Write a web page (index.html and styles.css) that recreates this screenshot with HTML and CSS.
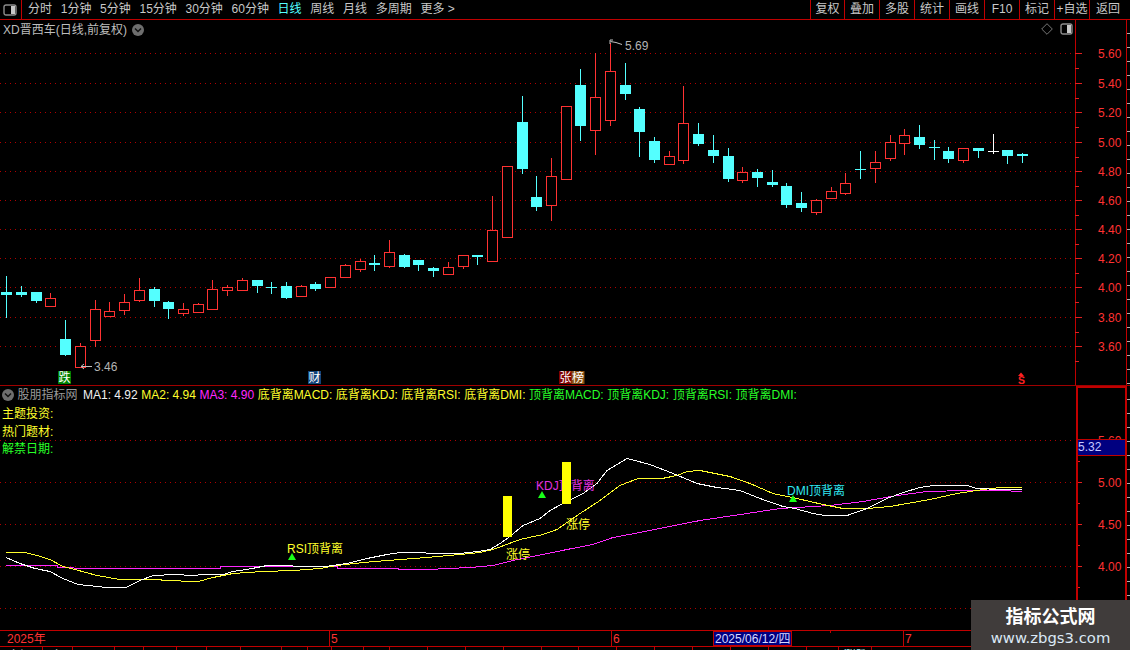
FILE: index.html
```html
<!DOCTYPE html>
<html lang="zh-CN">
<head>
<meta charset="utf-8">
<title>XD晋西车</title>
<link rel="stylesheet" href="styles.css">
</head>
<body>
<div class="app">
  <header class="toolbar">
    <div class="toggle-cell">
      <svg class="win-icon" width="14" height="12" viewBox="0 0 14 12"><rect x="1" y="1" width="12" height="10" rx="2" fill="none" stroke="#8c8c8c" stroke-width="1.4"/><rect x="8" y="2" width="4" height="8" fill="#c8c8c8"/></svg>
    </div>
    <nav class="periods">
      <span>分时</span><span>1分钟</span><span>5分钟</span><span>15分钟</span><span>30分钟</span><span>60分钟</span><span class="active">日线</span><span>周线</span><span>月线</span><span>多周期</span><span>更多 &gt;</span>
    </nav>
    <div class="tools">
      <span>复权</span><span>叠加</span><span>多股</span><span>统计</span><span>画线</span><span>F10</span><span>标记</span><span>+自选</span><span class="back">返回</span>
    </div>
  </header>

  <section class="row price-row">
    <div class="plot">
      <svg id="price" class="canvas" width="1075" height="365" viewBox="0 20 1075 365"></svg>
      <div class="pane-title">
        <span>XD晋西车(日线,前复权)</span>
        <svg width="12" height="12" viewBox="0 0 12 12"><circle cx="6" cy="6" r="6" fill="#6e6e6e"/><path d="M3 4.5 6 7.5 9 4.5" fill="none" stroke="#111" stroke-width="1.5"/></svg>
      </div>
      <div class="pane-icons">
        <svg width="12" height="12" viewBox="0 0 12 12"><path d="M6 .7 11.3 6 6 11.3 .7 6Z" fill="none" stroke="#777"/></svg>
        <svg width="13" height="12" viewBox="0 0 13 12"><rect x="1" y="1" width="11" height="10" rx="2" fill="none" stroke="#8c8c8c" stroke-width="1.4"/><rect x="7" y="2" width="4" height="8" fill="#c8c8c8"/></svg>
      </div>
    </div>
    <svg id="priceAxis" class="axis" width="51" height="365" viewBox="1075 20 51 365"></svg>
    <div class="rail"></div>
  </section>

  <section class="row ind-row">
    <div class="plot">
      <svg id="ind" class="canvas" width="1075" height="244" viewBox="0 386 1075 244"></svg>
      <div class="ind-head">
        <div class="legend">
          <svg class="legend-icon" width="12" height="12" viewBox="0 0 12 12"><circle cx="6" cy="6" r="6" fill="#6e6e6e"/><path d="M3 4.5 6 7.5 9 4.5" fill="none" stroke="#111" stroke-width="1.5"/></svg>
          <span class="gray name">股朋指标网</span>
          <span class="white">MA1: 4.92</span>
          <span class="yellow">MA2: 4.94</span>
          <span class="magenta">MA3: 4.90</span>
          <span class="yellow">底背离MACD:</span>
          <span class="yellow">底背离KDJ:</span>
          <span class="yellow">底背离RSI:</span>
          <span class="yellow">底背离DMI:</span>
          <span class="green">顶背离MACD:</span>
          <span class="green">顶背离KDJ:</span>
          <span class="green">顶背离RSI:</span>
          <span class="green">顶背离DMI:</span>
        </div>
        <div class="facts">
          <div class="yellow">主题投资:</div>
          <div class="yellow">热门题材:</div>
          <div class="green">解禁日期:</div>
        </div>
      </div>
    </div>
    <div class="ind-axis">
      <svg id="indAxis" width="48" height="242" viewBox="1078 388 48 242"></svg>
      <div class="cur-value">5.32</div>
    </div>
    <div class="rail"></div>
  </section>

  <svg id="dates" class="dates" width="1130" height="16" viewBox="0 630 1130 16"></svg>
  <div class="status">
    <span>上证</span><span>上</span><span></span><span></span><span></span><span></span><span></span><span></span><span></span><span></span><span></span><span></span><span></span><span></span><span></span><span></span><span></span><span></span><span></span><span></span><span></span><span></span><span></span><span></span><span class="st-cyan">涨跌</span><span></span>
  </div>

  <aside class="watermark">
    <div class="wm-title">指标公式网</div>
    <div class="wm-url">www.zbgs3.com</div>
  </aside>
</div>
<script src="chart.js"></script>
</body>
</html>
```
FILE: styles.css
```css
* { box-sizing: border-box; }
html, body { margin: 0; padding: 0; background: #000; }
body { font-family: "Liberation Sans", "Noto Sans CJK SC", sans-serif; font-size: 12px; color: #c8c8c8; }
.app { position: relative; width: 1130px; height: 650px; overflow: hidden; display: flex; flex-direction: column; background: #000; }

.toolbar { display: flex; height: 20px; flex: none; border-bottom: 1px solid #c00000; line-height: 18px; }
.toggle-cell { width: 22px; border-right: 1px solid #c00000; display: flex; align-items: center; justify-content: center; padding-right: 1px; }
.periods { display: flex; gap: 8.7px; padding-left: 6px; }
.periods .active { color: #54ffff; }
.tools { margin-left: auto; display: grid; grid-template-columns: 34px repeat(7, 35px) 41px; }
.tools span { border-left: 1px solid #c00000; text-align: center; }
.tools .back { padding-right: 4px; }

.row { display: flex; flex: none; }
.price-row { height: 366px; border-bottom: 1px solid #a00000; }
.ind-row { height: 244px; }
.plot { position: relative; width: 1075px; flex: none; }
.canvas { display: block; }
.axis { display: block; flex: none; }
.rail { width: 4px; flex: none; border-left: 1px solid #c00000; background: repeating-linear-gradient(180deg, #000 0 13px, #b0b0b0 13px 14px); }

.pane-title { position: absolute; left: 3px; top: 2px; display: flex; align-items: center; gap: 5px; line-height: 16px; color: #bdbdbd; }
.pane-icons { position: absolute; left: 1041px; top: 3px; display: flex; gap: 7px; }

.ind-head { position: absolute; left: 0; top: 0; }
.legend { display: flex; align-items: center; gap: 3.5px; padding: 1px 0 0 2px; line-height: 16px; white-space: nowrap; }
.legend .name { margin-right: 2px; }
.facts { padding: 3px 0 0 2px; line-height: 17.5px; }

.gray { color: #9a9a9a; }
.white { color: #f0f0f0; }
.yellow { color: #ffff2c; }
.magenta { color: #ff28ff; }
.green { color: #28ff28; }

.ind-axis { position: relative; width: 51px; flex: none; border: solid #c00000; border-width: 2px 2px 0 2px; margin-left: 1px; margin-right: -1px; }
.ind-axis svg { display: block; }
.cur-value { position: absolute; left: 0; right: 0; top: 51px; height: 17px; background: #000080; border-top: 1px solid #c00000; border-bottom: 1px solid #c00000; color: #c8c8ff; line-height: 15px; }

.dates { display: block; flex: none; }
.status { flex: 1; border-top: 1px solid #c00000; color: #f0f0f0; display: grid; grid-template-columns: 43px 30px 42px 29px 33px 30px 34px 41px 26px 24px 32px 26px repeat(11, 37.9px) 32px 33px 1fr; line-height: 16px; }
.status span { padding: 1px 0 0 8px; border-right: 1px solid #c00000; height: 4px; overflow: hidden; }
.status .st-cyan { padding-left: 5px; color: #b8f8ff; }

.watermark { position: absolute; left: 971px; top: 600px; width: 159px; height: 50px; background: #403c3b; text-align: center; color: #fff; }
.wm-title { font-family: "Noto Sans CJK SC", sans-serif; font-weight: 700; font-size: 18px; line-height: 26px; padding-top: 2px; }
.wm-url { font-family: "DejaVu Sans", sans-serif; font-size: 14.8px; line-height: 19px; color: #dbe8f5; }

svg text { font-family: "Liberation Sans", "Noto Sans CJK SC", sans-serif; font-size: 12px; }
svg text.sell-mark { font-size: 10.5px; font-weight: 700; }
.c-line { fill: none; stroke-width: 1; shape-rendering: crispEdges; }
.grid { stroke: #b00000; stroke-dasharray: 1 4; shape-rendering: crispEdges; }
.tick { stroke: #e02020; shape-rendering: crispEdges; }
.rline { stroke: #c00000; shape-rendering: crispEdges; }
.axis-text { fill: #ff3232; }
```
FILE: chart.js
```js
var NS = 'http://www.w3.org/2000/svg';
function el(parent, tag, attrs, text) {
  var n = document.createElementNS(NS, tag);
  for (var k in attrs) n.setAttribute(k, attrs[k]);
  if (text) n.textContent = text;
  parent.appendChild(n);
  return n;
}
function $(id) { return document.getElementById(id); }

var RED = '#ff3232', CYAN = '#54ffff';
// colour, high, body top, body bottom, low
var candles = [
 ['c',276,292,295,317],['c',286,292,295,296],['c',292,292,301,302],['r',293,298,306,306],
 ['c',320,339,355,355],['r',343,346,367,367],['r',300,309,340,346],['r',302,311,316,316],
 ['r',294,302,310,314],['r',278,290,300,301],['c',287,289,301,306],['c',301,302,309,318],
 ['r',303,309,313,315],['r',303,304,312,312],['r',280,289,309,309],['r',285,287,290,295],
 ['r',278,280,290,290],['c',280,280,286,292],['c',282,287,288,293],['c',282,286,298,298],
 ['r',285,286,296,296],['c',282,284,289,290],['r',277,277,287,287],['r',264,265,277,277],
 ['r',259,261,269,271],['c',255,263,265,270],['r',240,252,266,267],['c',254,255,267,267],
 ['c',260,260,265,270],['c',267,268,271,276],['r',262,267,274,274],['r',255,255,266,268],
 ['c',255,255,257,264],['r',196,230,261,261],['r',166,166,237,237],['c',96,122,169,173],
 ['c',176,197,207,210],['r',158,176,205,220],['r',106,106,179,179],['c',69,85,126,140],
 ['r',53,97,130,154],['r',43,71,120,125],['c',63,85,94,99],['c',107,109,132,156],
 ['c',137,141,160,162],['r',151,156,164,164],['r',86,123,160,163],['c',123,134,144,145],
 ['c',135,150,156,162],['c',148,156,179,181],['r',167,172,180,182],['c',169,172,178,186],
 ['c',170,182,185,186],['c',183,186,205,207],['c',192,203,208,211],['r',199,200,212,214],
 ['r',187,191,198,198],['r',173,183,193,194],['c',151,169,170,178],['r',151,162,168,182],
 ['r',135,142,158,160],['r',129,135,143,154],['c',125,137,145,148],['c',140,147,148,159],
 ['c',147,151,159,162],['r',148,148,160,162],['c',148,148,151,157],['w',134,151,152,153],
 ['c',150,150,156,163],['c',153,154,156,162]
];

var price = $('price');
[53,83,112,142,171,200,229,258,287,317,346].forEach(function (y) {
  el(price, 'line', {x1:0, x2:1075, y1:y+.5, y2:y+.5, 'class':'grid'});
});
candles.forEach(function (d, i) {
  var x = Math.round(6.3 + 14.72 * i);
  var col = d[0] === 'r' ? RED : d[0] === 'w' ? '#ffffff' : CYAN;
  el(price, 'rect', {x:x, y:d[1], width:1, height:d[4]-d[1]+1, fill:col, 'shape-rendering':'crispEdges'});
  if (d[0] === 'r') {
    el(price, 'rect', {x:x-5+.5, y:d[2]+.5, width:10, height:d[3]-d[2], fill:'#000', stroke:col, 'shape-rendering':'crispEdges'});
  } else {
    el(price, 'rect', {x:x-5, y:d[2], width:11, height:Math.max(d[3]-d[2],1), fill:col, 'shape-rendering':'crispEdges'});
  }
});
// extreme price markers
el(price, 'path', {d:'M92 366.5H81M84 364 81 366.5 84 369', fill:'none', stroke:'#c0c0c0'});
el(price, 'text', {x:94, y:371, fill:'#b4b4b4'}, '3.46');
el(price, 'path', {d:'M622 44.5 616 42.5 610.5 41.5M613 40H610V44', fill:'none', stroke:'#c0c0c0'});
el(price, 'text', {x:625, y:50, fill:'#b4b4b4'}, '5.69');

// event tags along the bottom of the price pane
[[58,'跌','#008000'],[308,'财','#12447a'],[559,'张','#800000'],[571.5,'榜','#8a5012']].forEach(function (t) {
  el(price, 'rect', {x:t[0], y:371, width:13, height:13, fill:t[2]});
  el(price, 'text', {x:t[0]+.5, y:382, fill:'#fff'}, t[1]);
});
el(price, 'text', {x:1018, y:384, fill:'#ff2020', 'class':'sell-mark'}, 'S');
el(price, 'path', {d:'M1021 372.5 1024 376H1018Z', fill:'#ff2020'});

// price axis
var pa = $('priceAxis');
el(pa, 'line', {x1:1075.5, x2:1075.5, y1:20, y2:385, 'class':'rline'});
[['5.60',53],['5.40',83],['5.20',112],['5.00',142],['4.80',171],['4.60',200],['4.40',229],['4.20',258],['4.00',287],['3.80',317],['3.60',346]].forEach(function (a) {
  el(pa, 'line', {x1:1075, x2:1082, y1:a[1]+.5, y2:a[1]+.5, 'class':'tick'});
  el(pa, 'line', {x1:1075, x2:1079, y1:a[1]+15.5, y2:a[1]+15.5, 'class':'tick'});
  el(pa, 'text', {x:1098, y:a[1]+5, 'class':'axis-text'}, a[0]);
});

// indicator pane
var ind = $('ind');
[440,482,524,566,608].forEach(function (y) {
  el(ind, 'line', {x1:0, x2:1075, y1:y+.5, y2:y+.5, 'class':'grid'});
});
var white = [[6,557],[20,563],[35,568],[50,571],[63,578],[78,584],[88,585],[107,587],[126,587],[140,580],[153,575],[175,574],[192,575],[205,574],[223,574],[233,571],[247,569],[267,565],[278,565],[308,566],[325,566],[347,563],[367,558],[387,554],[400,552],[422,552],[430,553],[460,553],[478,551],[490,549],[500,543],[510,536],[523,525],[540,518],[550,510],[563,503],[583,493],[597,483],[607,470],[627,458],[650,464],[673,473],[697,483],[717,487],[740,490],[760,498],[783,506],[795,508],[813,513],[825,515],[847,515],[867,508],[887,498],[903,492],[920,487],[933,485],[967,485],[977,488],[1000,489],[1022,489]];
var yellow = [[6,552],[25,552],[37,555],[50,559],[63,566],[75,569],[97,575],[120,579],[160,579],[163,580],[198,581],[213,577],[233,573],[263,571],[293,570],[320,568],[337,565],[363,562],[400,559],[427,557],[460,554],[480,552],[493,549],[520,539],[543,534],[557,529],[580,513],[600,500],[620,485],[638,478],[662,478],[677,475],[687,471],[700,470],[730,476],[750,483],[773,493],[797,498],[823,504],[843,508],[867,508],[890,506],[930,499],[957,493],[983,489],[1000,487],[1022,487]];
var magenta = [[6,565],[57,565],[58,567],[73,567],[75,568],[220,568],[220,566],[337,566],[338,568],[397,568],[400,569],[427,569],[470,567],[493,565],[513,560],[567,549],[593,544],[613,537],[640,532],[700,520],[747,513],[780,508],[830,505],[863,501],[897,495],[927,491],[967,490],[1000,490],[1022,491]];
function poly(pts, col) {
  el(ind, 'polyline', {points:pts.map(function (p) { return p[0] + ',' + (p[1]+.5); }).join(' '), stroke:col, 'class':'c-line'});
}
poly(magenta, '#ff28ff');
poly(yellow, '#ffff2c');
poly(white, '#ffffff');

[['RSI顶背离',287,553,'#ffff2c',292,553],['KDJ顶背离',536,490,'#e030e0',542,491],['DMI顶背离',787,495,'#30e8f0',793,495]].forEach(function (l) {
  el(ind, 'text', {x:l[1], y:l[2], fill:l[3]}, l[0]);
  el(ind, 'path', {d:'M'+l[4]+' '+l[5]+'l4 7h-8Z', fill:'#19ff19'});
});
[[566,529],[506,559]].forEach(function (p) {
  el(ind, 'text', {x:p[0], y:p[1], fill:'#ffff2c'}, '涨停');
});
[[503,496,41],[562,462,42]].forEach(function (b) {
  el(ind, 'rect', {x:b[0], y:b[1], width:9, height:b[2], fill:'#ffff00'});
});

// indicator axis
var ia = $('indAxis');
[['5.60',440],['5.00',482],['4.50',524],['4.00',566]].forEach(function (a) {
  el(ia, 'line', {x1:1078, x2:1082, y1:a[1]+.5, y2:a[1]+.5, 'class':'tick'});
  el(ia, 'text', {x:1098, y:a[1]+5, 'class':'axis-text'}, a[0]);
});
[461,503,545,587,608].forEach(function (y) {
  el(ia, 'line', {x1:1078, x2:1080, y1:y+.5, y2:y+.5, 'class':'tick'});
});

// date strip
var ds = $('dates');
el(ds, 'line', {x1:0, x2:1130, y1:630.5, y2:630.5, 'class':'rline'});
[329,611,903].forEach(function (x) {
  el(ds, 'line', {x1:x+.5, x2:x+.5, y1:630, y2:646, 'class':'rline'});
});
el(ds, 'line', {x1:830.5, x2:830.5, y1:630, y2:633, 'class':'rline'});
el(ds, 'text', {x:7, y:643, fill:RED}, '2025年');
el(ds, 'text', {x:331, y:643, fill:RED}, '5');
el(ds, 'text', {x:613, y:643, fill:RED}, '6');
el(ds, 'text', {x:905, y:643, fill:RED}, '7');
el(ds, 'rect', {x:713.5, y:631.5, width:78, height:14, fill:'#000080', stroke:'#c00000'});
el(ds, 'text', {x:715, y:643, fill:'#d8d8ff'}, '2025/06/12/四');
```
